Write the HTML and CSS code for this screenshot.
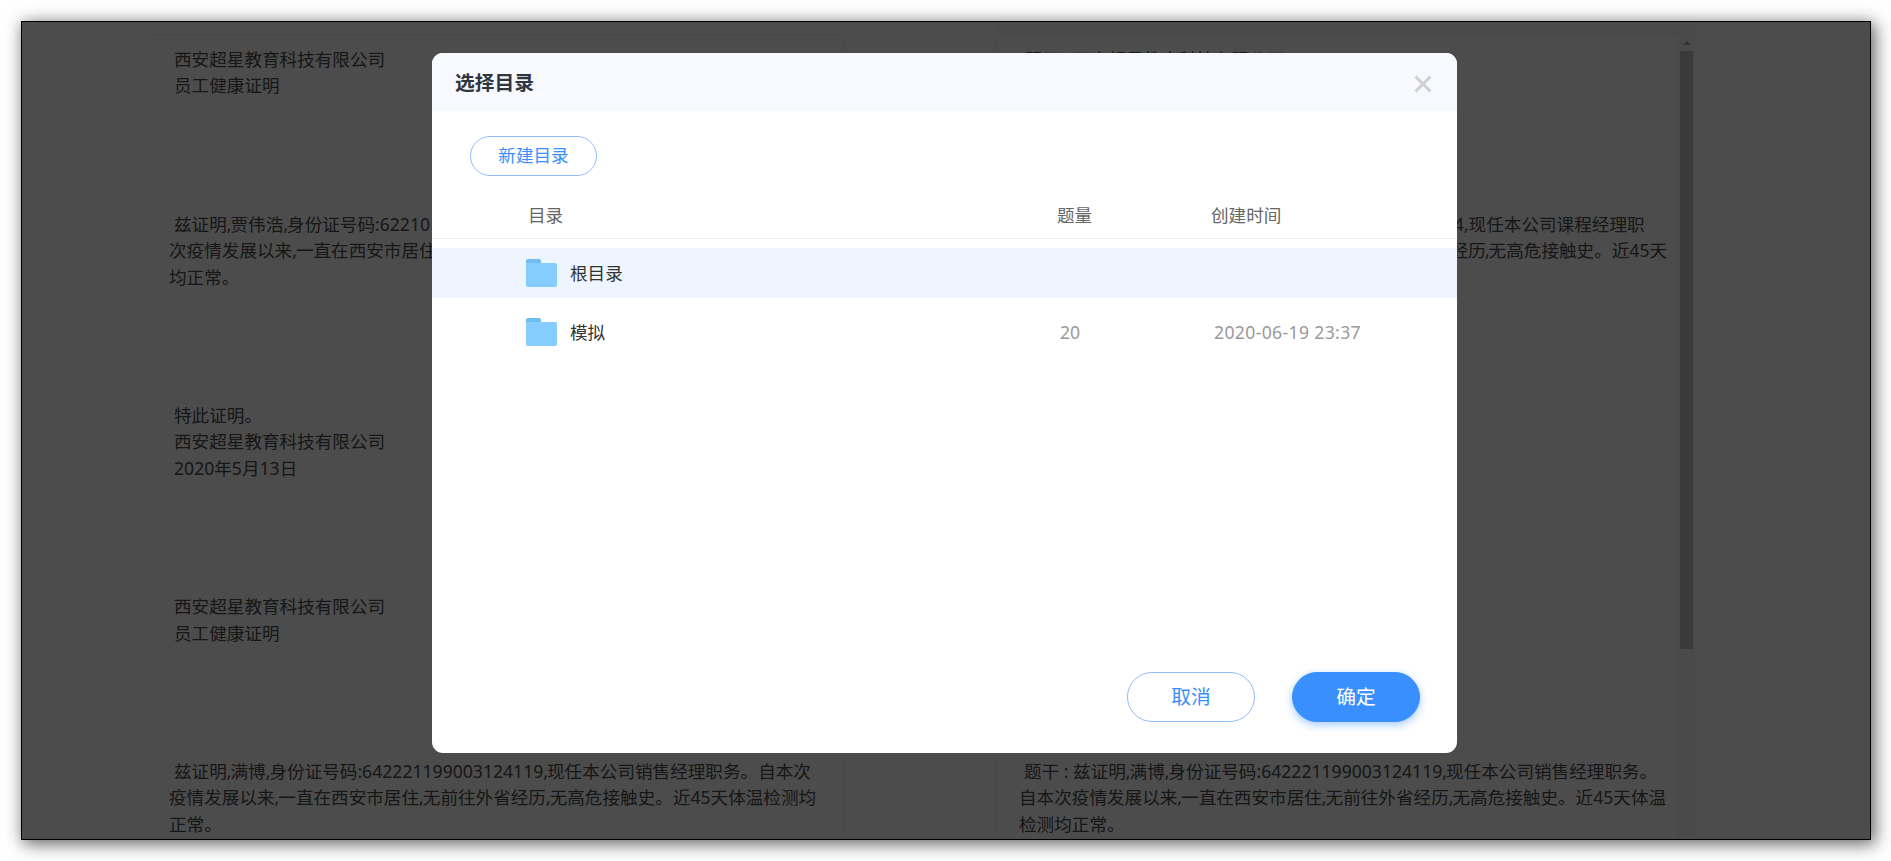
FILE: index.html
```html
<!DOCTYPE html>
<html lang="zh-CN">
<head>
<meta charset="utf-8">
<title>选择目录</title>
<link rel="stylesheet" href="styles.css">
</head>
<body>
<div class="window">
  <div class="page">
    <section class="panel panel-left">
      <div class="doc">
        <p>西安超星教育科技有限公司<br>员工健康证明</p>
        <p class="body-text"><span class="ind">兹证明<span class="cm">,</span>贾伟浩<span class="cm">,</span>身份证号码:622101199001014214,现任本公司课程经理职务。自本</span><br>次疫情发展以来<span class="cm">,</span>一直在西安市居住,无前往外省经历,无高危接触史。近45天体温检测<br>均正常。</p>
        <p>特此证明。<br>西安超星教育科技有限公司<br>2020年5月13日</p>
        <p>西安超星教育科技有限公司<br>员工健康证明</p>
        <p class="body-text"><span class="ind">兹证明<span class="cm">,</span>满博<span class="cm">,</span>身份证号码:642221199003124119<span class="cm">,</span>现任本公司销售经理职务。自本次</span><br>疫情发展以来<span class="cm">,</span>一直在西安市居住<span class="cm">,</span>无前往外省经历<span class="cm">,</span>无高危接触史。近45天体温检测均<br>正常。</p>
      </div>
    </section>
    <section class="panel panel-right">
      <div class="doc">
        <p>题干 : 西安超星教育科技有限公司<br>员工健康证明</p>
        <p class="body-text"><span class="ind">题干 : 兹证明<span class="cw">,</span>贾伟浩<span class="cw">,</span>身份证号码:622101199001014214,现任本公司课程经理职</span><br>务。自本次疫情发展以来,一直在西安市居住,无前往外省经<span class="cm">历,</span>无高危接触史。近45天<br>体温检测均正常。</p>
        <p>特此证明。<br>西安超星教育科技有限公司<br>2020年5月13日</p>
        <p>题干 : 西安超星教育科技有限公司<br>员工健康证明</p>
        <p class="body-text"><span class="ind">题干 : 兹证明<span class="cm">,</span>满博<span class="cm">,</span>身份证号码:642221199003124119<span class="cm">,</span>现任本公司销售经理职务。</span><br>自本次疫情发展以来<span class="cm">,</span>一直在西安市居住<span class="cm">,</span>无前往外省经历<span class="cm">,</span>无高危接触史。近45天体温<br>检测均正常。</p>
      </div>
      <div class="scrollbar">
        <div class="arrow"></div>
        <div class="thumb"></div>
      </div>
    </section>
  </div>

  <div class="overlay">
    <div class="modal">
      <header class="modal-head">
        <h2 class="modal-title">选择目录</h2>
        <svg class="close" viewBox="0 0 18 18" width="18" height="18"><path d="M1.5 1.5 16.500 16.500M16.500 1.500 1.500 16.500"/></svg>
      </header>
      <button class="btn btn-new">新建目录</button>
      <div class="cols cols-head">
        <div class="c-name">目录</div>
        <div>题量</div>
        <div>创建时间</div>
      </div>
      <div class="cols row row-on">
        <div class="c-name c-folder">
          <svg class="folder" viewBox="0 0 31 28" width="31" height="28"><path class="tab" d="M2 0h11c1.200 0 2 .8 2 2v3H0V2C0 .8.800 0 2 0z"/><path class="bodyf" d="M0 4h29c1.200 0 2 .8 2 2v20c0 1.200-.8 2-2 2H2c-1.200 0-2-.8-2-2z"/></svg>
          <span class="c-label">根目录</span>
        </div>
        <div></div>
        <div></div>
      </div>
      <div class="cols row">
        <div class="c-name c-folder">
          <svg class="folder" viewBox="0 0 31 28" width="31" height="28"><path class="tab" d="M2 0h11c1.200 0 2 .8 2 2v3H0V2C0 .8.800 0 2 0z"/><path class="bodyf" d="M0 4h29c1.200 0 2 .8 2 2v20c0 1.200-.8 2-2 2H2c-1.200 0-2-.8-2-2z"/></svg>
          <span class="c-label">模拟</span>
        </div>
        <div class="c-val">20</div>
        <div class="c-val c-date">2020-06-19 23:37</div>
      </div>
      <footer class="modal-foot">
        <button class="btn btn-lg">取消</button>
        <button class="btn btn-lg btn-primary">确定</button>
      </footer>
    </div>
  </div>
</div>
</body>
</html>
```

FILE: styles.css
```css
* { box-sizing: border-box; }

html, body { height: 100%; }

body {
  margin: 0;
  padding: 21px 20px 21px 21px;
  background: #fff;
  overflow: hidden;
  font-family: "Noto Sans", "Noto Sans CJK SC", sans-serif;
  font-size: 17.6px;
  color: #333;
}

.window {
  position: relative;
  height: 819px;
  border: 1px solid #000;
  background: #fff;
  overflow: hidden;
  box-shadow: 3px 3px 16px 1px rgba(0, 0, 0, .62);
}

.page {
  display: flex;
  height: 100%;
  padding: 12px 0 0 123px;
  align-items: stretch;
}

.panel {
  width: 700px;
  border-top: 1px solid #f0f0f0;
  border-left: 1px solid #f5f5f5;
  display: flex;
}

.panel-left { border-right: 1px solid #f5f5f5; }

.panel-right {
  margin-left: 150px;
  background: #fff;
  box-shadow: 0 -12px 0 #f8f8f8;
}

.doc {
  flex: 1;
  display: flex;
  flex-direction: column;
  gap: 112px;
  padding: 11px 0 0 23px;
  line-height: 26.4px;
  white-space: nowrap;
  color: #4d4d4d;
}

.doc p { margin: 0; padding-left: 5px; }

.doc p.body-text { padding-left: 0; }

.ind { padding-left: 5px; }

.cm { letter-spacing: -1px; }

.cw { letter-spacing: 1px; }

.scrollbar {
  width: 17px;
  flex: none;
  background: #f8f8f8;
  padding: 6px 2px 0;
}

.arrow {
  width: 0;
  height: 0;
  margin: 0 auto 6px;
  border-left: 4px solid transparent;
  border-right: 4px solid transparent;
  border-bottom: 4px solid #b0b0b0;
}

.thumb {
  width: 13px;
  height: 598px;
  background: #c4c4c4;
}

.overlay {
  position: absolute;
  inset: 0;
  background: rgba(0, 0, 0, .7);
  padding: 31px 0 0 410px;
}

.modal {
  width: 1025px;
  height: 700px;
  background: #fff;
  border-radius: 11px;
  overflow: hidden;
  display: flex;
  flex-direction: column;
  align-items: flex-start;
}

.modal-head {
  width: 100%;
  height: 58px;
  flex: none;
  background: #f7f9ff;
  padding: 0 25px 0 23px;
  display: flex;
  align-items: center;
  justify-content: space-between;
}

.modal-title {
  margin: 0 0 2px;
  font-size: 19.8px;
  font-weight: 700;
  color: #303540;
  font-family: "Noto Sans CJK SC", sans-serif;
}

.close {
  margin-top: 4px;
  fill: none;
  stroke: #cfcfcf;
  stroke-width: 3;
}

.btn {
  font: inherit;
  font-family: "Noto Sans CJK SC", sans-serif;
  background: #fff;
  color: #3a8fff;
  border: 1px solid #8dbdf8;
  border-radius: 25px;
  padding: 0 0 2px;
}

.btn-new {
  width: 127px;
  height: 40px;
  margin: 25px 0 0 38px;
  flex: none;
  line-height: 1;
}

.cols {
  width: 100%;
  display: grid;
  grid-template-columns: 625px 154px 1fr;
  align-items: center;
  flex: none;
}

.cols-head {
  padding: 26px 0 10px;
  line-height: 26px;
  color: #666;
  border-bottom: 1px solid #f0f0f0;
  margin-bottom: 9px;
}

.cols-head .c-name { padding-left: 96px; }

.row { height: 50px; margin-bottom: 9px; }

.row-on { background: #eef5fe; }

.c-folder {
  padding-left: 94px;
  display: flex;
  align-items: center;
  gap: 13px;
}

.c-label { margin-bottom: 2px; }

.tab { fill: #70bdf2; }

.bodyf { fill: #85ccff; }

.c-val { padding-left: 3px; color: #999; }

.c-date { letter-spacing: .35px; }

.modal-foot {
  margin-top: auto;
  width: 100%;
  display: flex;
  justify-content: flex-end;
  gap: 37px;
  padding: 0 37px 31px 0;
}

.btn-lg {
  width: 128px;
  height: 50px;
  font-size: 19.8px;
  line-height: 1;
}

.btn-primary {
  background: #3a8fff;
  border-color: #3a8fff;
  color: #fff;
  box-shadow: 0 3px 8px rgba(58, 143, 255, .45);
}
```
